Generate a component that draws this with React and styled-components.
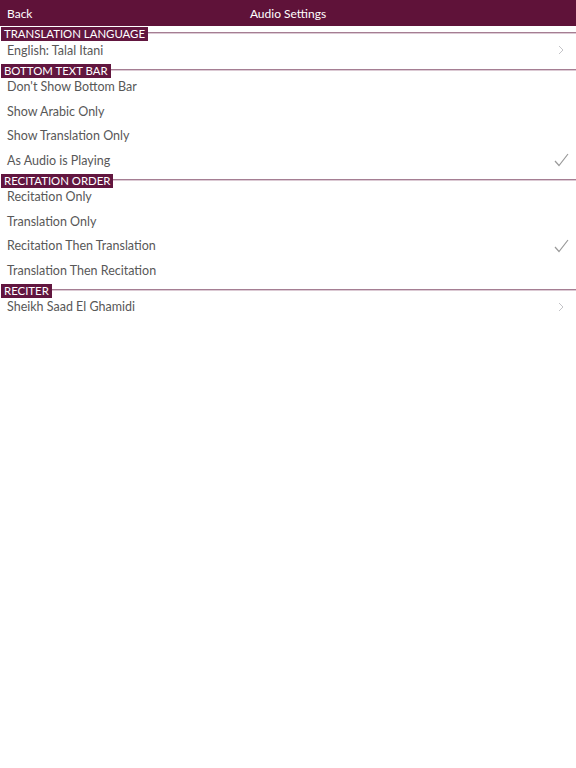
import React from 'react';
import styled, { createGlobalStyle } from 'styled-components';

const GlobalStyle = createGlobalStyle`
    body {
        margin: 0;
        background: #ffffff;
        font-family: "Lato", "Liberation Sans", sans-serif;
    }
`;

const Page = styled.div`
    width: 576px;
    min-height: 768px;
    background: #ffffff;
`;

const NavBar = styled.div`
    height: 26px;
    background: #5f1239;
    display: grid;
    grid-template-columns: 1fr auto 1fr;
    align-items: center;
    padding: 0 7px;
    color: #ffffff;
    font-size: 12px;
`;

const NavTitle = styled.span`
    text-align: center;
`;

const SectionHeader = styled.div`
    display: flex;
    align-items: flex-start;
    height: 14px;
    margin-top: 1px;
    margin-bottom: -3px;
    position: relative;
    z-index: 1;
`;

const SectionLabel = styled.span`
    background: #62163f;
    color: #ffffff;
    font-size: 11.4px;
    line-height: 14px;
    padding: 0 3px 0 3px;
    margin-left: 1px;
    white-space: nowrap;
`;

const SectionRule = styled.div`
    flex: 1;
    height: 1px;
    margin-top: 5px;
    background: #a57e93;
    box-shadow: 0 1px 0 #dccad4;
`;

const Row = styled.div`
    height: 24.5px;
    display: flex;
    align-items: center;
    justify-content: space-between;
    padding: 0 7px;
    font-size: 12.5px;
    color: #585858;
`;

const Accessory = styled.span`
    display: flex;
    align-items: center;
    width: 16px;
    justify-content: center;
`;

function Chevron() {
    return (
        <svg width="6" height="10" viewBox="0 0 6 10">
            <path d="M1 1 L5 5 L1 9" fill="none" stroke="#c4c4c8" strokeWidth="1" />
        </svg>
    );
}

function Check() {
    return (
        <svg width="15" height="14" viewBox="0 0 15 14">
            <path d="M1 8 L5 12.5 L14 1" fill="none" stroke="#9a9a9a" strokeWidth="1.2" />
        </svg>
    );
}

const sections = [
    {
        title: 'TRANSLATION LANGUAGE',
        rows: [{ text: 'English: Talal Itani', accessory: 'chevron' }],
    },
    {
        title: 'BOTTOM TEXT BAR',
        rows: [
            { text: "Don't Show Bottom Bar" },
            { text: 'Show Arabic Only' },
            { text: 'Show Translation Only' },
            { text: 'As Audio is Playing', accessory: 'check' },
        ],
    },
    {
        title: 'RECITATION ORDER',
        rows: [
            { text: 'Recitation Only' },
            { text: 'Translation Only' },
            { text: 'Recitation Then Translation', accessory: 'check' },
            { text: 'Translation Then Recitation' },
        ],
    },
    {
        title: 'RECITER',
        rows: [{ text: 'Sheikh Saad El Ghamidi', accessory: 'chevron' }],
    },
];

export default function App() {
    return (
        <Page>
            <GlobalStyle />
            <NavBar>
                <span>Back</span>
                <NavTitle>Audio Settings</NavTitle>
                <span />
            </NavBar>
            {sections.map((section) => (
                <div key={section.title}>
                    <SectionHeader>
                        <SectionLabel>{section.title}</SectionLabel>
                        <SectionRule />
                    </SectionHeader>
                    {section.rows.map((row) => (
                        <Row key={row.text}>
                            <span>{row.text}</span>
                            <Accessory>
                                {row.accessory === 'chevron' && <Chevron />}
                                {row.accessory === 'check' && <Check />}
                            </Accessory>
                        </Row>
                    ))}
                </div>
            ))}
        </Page>
    );
}
